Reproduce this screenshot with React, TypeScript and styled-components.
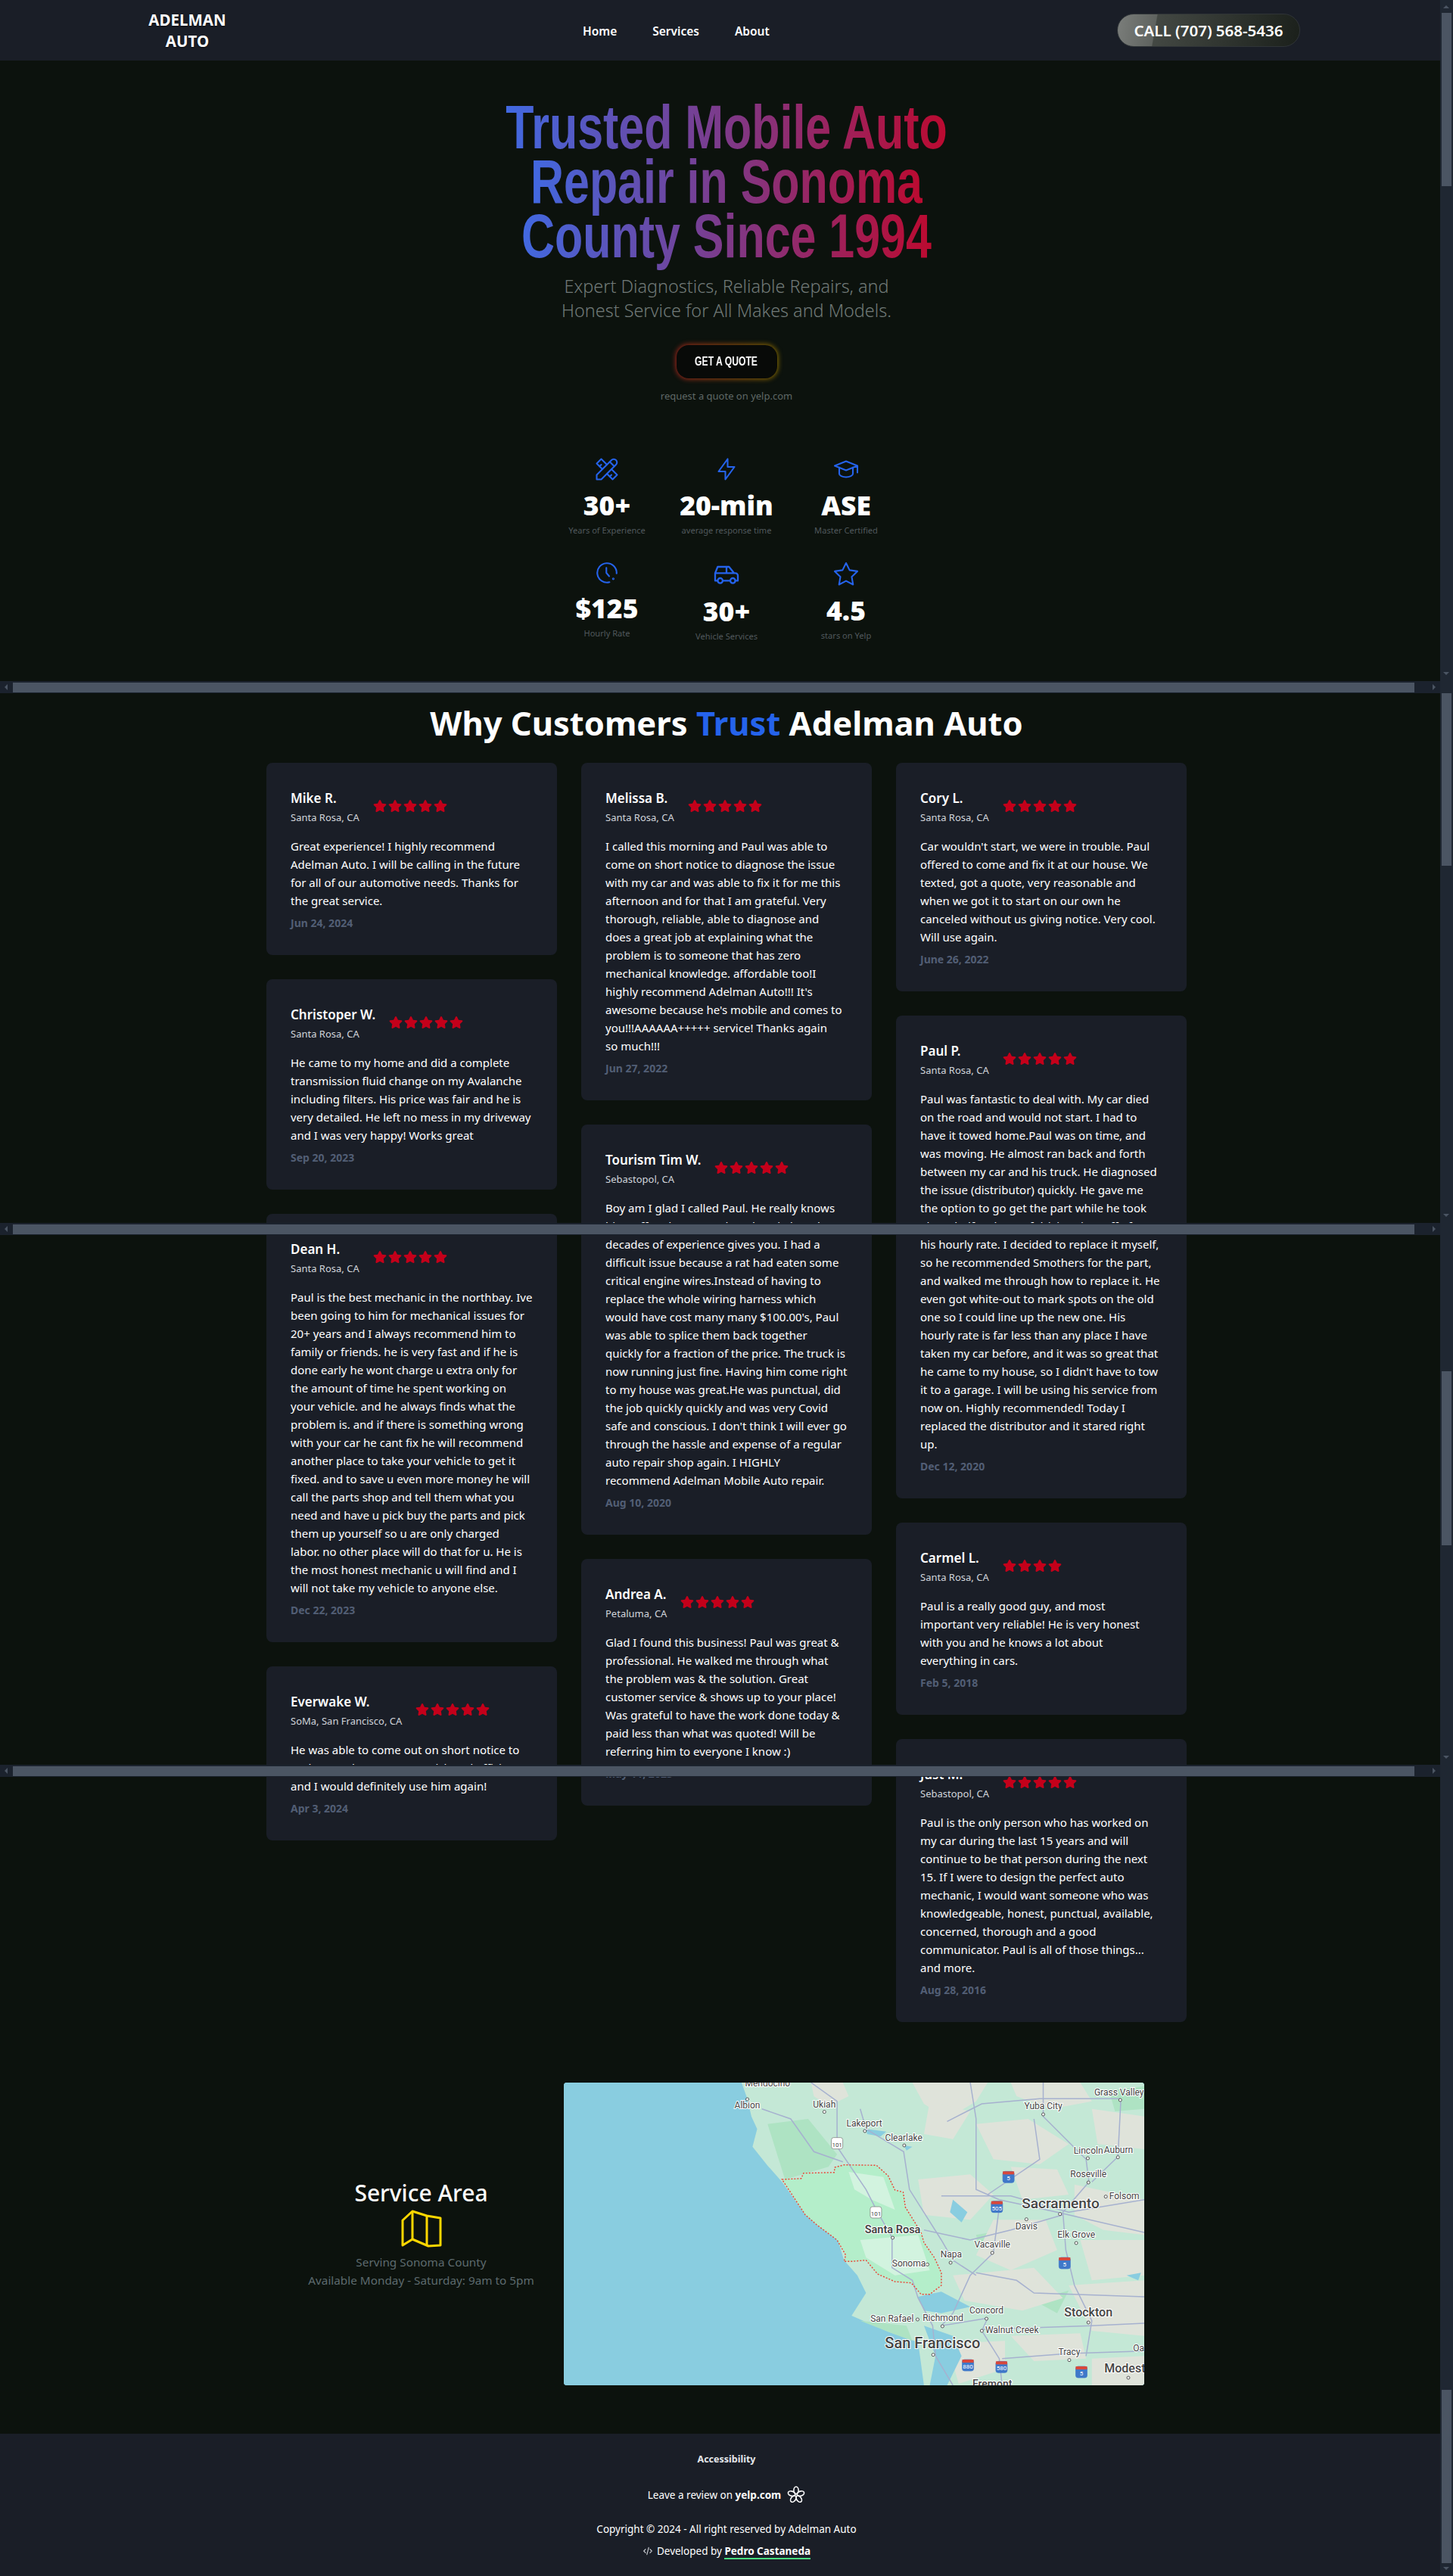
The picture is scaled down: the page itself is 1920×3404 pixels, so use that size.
import React from "react";
import styled, { createGlobalStyle } from "styled-components";
import { FaStar } from "react-icons/fa";
import { TbBolt, TbCar, TbCode, TbSchool, TbStar, TbTools } from "react-icons/tb";

const GlobalStyle = createGlobalStyle`
  * { box-sizing: border-box; }
  html, body { margin: 0; padding: 0; background: #0c120d; }
  body {
    font-family: "Noto Sans", "Liberation Sans", sans-serif;
    color: #fff;
    width: 1920px;
  }
`;

type Review = {
  name: string;
  place: string;
  text: string;
  date: string;
  stars?: number;
};

const column1: Review[] = [
  {
    name: "Mike R.",
    place: "Santa Rosa, CA",
    text: "Great experience! I highly recommend Adelman Auto. I will be calling in the future for all of our automotive needs. Thanks for the great service.",
    date: "Jun 24, 2024",
  },
  {
    name: "Christoper W.",
    place: "Santa Rosa, CA",
    text: "He came to my home and did a complete transmission fluid change on my Avalanche including filters. His price was fair and he is very detailed. He left no mess in my driveway and I was very happy! Works great",
    date: "Sep 20, 2023",
  },
  {
    name: "Dean H.",
    place: "Santa Rosa, CA",
    text: "Paul is the best mechanic in the northbay. Ive been going to him for mechanical issues for 20+ years and I always recommend him to family or friends. he is very fast and if he is done early he wont charge u extra only for the amount of time he spent working on your vehicle. and he always finds what the problem is. and if there is something wrong with your car he cant fix he will recommend another place to take your vehicle to get it fixed. and to save u even more money he will call the parts shop and tell them what you need and have u pick buy the parts and pick them up yourself so u are only charged\nlabor. no other place will do that for u. He is\nthe most honest mechanic u will find and I\nwill not take my vehicle to anyone else.",
    date: "Dec 22, 2023",
  },
  {
    name: "Everwake W.",
    place: "SoMa, San Francisco, CA",
    text: "He was able to come out on short notice to replace my battery, very quick and efficient and I would definitely use him again!",
    date: "Apr 3, 2024",
  },
];

const column2: Review[] = [
  {
    name: "Melissa B.",
    place: "Santa Rosa, CA",
    text: "I called this morning and Paul was able to come on short notice to diagnose the issue with my car and was able to fix it for me this afternoon and for that I am grateful. Very thorough, reliable, able to diagnose and does a great job at explaining what the problem is to someone that has zero mechanical knowledge. affordable too!I highly recommend Adelman Auto!!! It's awesome because he's mobile and comes to you!!!AAAAAA+++++ service! Thanks again\nso much!!!",
    date: "Jun 27, 2022",
  },
  {
    name: "Tourism Tim W.",
    place: "Sebastopol, CA",
    text: "Boy am I glad I called Paul. He really knows his stuff and you can't buy the wisdom that\ndecades of experience gives you. I had a difficult issue because a rat had eaten some critical engine wires.Instead of having to\nreplace the whole wiring harness which would have cost many many $100.00's, Paul was able to splice them back together\nquickly for a fraction of the price. The truck is now running just fine. Having him come right to my house was great.He was punctual, did the job quickly quickly and was very Covid safe and conscious. I don't think I will ever go through the hassle and expense of a regular auto repair shop again. I HIGHLY recommend Adelman Mobile Auto repair.",
    date: "Aug 10, 2020",
  },
  {
    name: "Andrea A.",
    place: "Petaluma, CA",
    text: "Glad I found this business! Paul was great & professional. He walked me through what the problem was & the solution. Great customer service & shows up to your place! Was grateful to have the work done today & paid less than what was quoted! Will be referring him to everyone I know :)",
    date: "May 11, 2023",
  },
];

const column3: Review[] = [
  {
    name: "Cory L.",
    place: "Santa Rosa, CA",
    text: "Car wouldn't start, we were in trouble. Paul offered to come and fix it at our house. We texted, got a quote, very reasonable and when we got it to start on our own he canceled without us giving notice. Very cool. Will use again.",
    date: "June 26, 2022",
  },
  {
    name: "Paul P.",
    place: "Santa Rosa, CA",
    text: "Paul was fantastic to deal with. My car died on the road and would not start. I had to have it towed home.Paul was on time, and was moving. He almost ran back and forth between my car and his truck. He diagnosed the issue (distributor) quickly. He gave me the option to go get the part while he took about half an hour of driving time off of\nhis hourly rate. I decided to replace it myself, so he recommended Smothers for the part, and walked me through how to replace it. He even got white-out to mark spots on the old one so I could line up the new one. His hourly rate is far less than any place I have taken my car before, and it was so great that he came to my house, so I didn't have to tow it to a garage. I will be using his service from now on. Highly recommended! Today I replaced the distributor and it stared right up.",
    date: "Dec 12, 2020",
  },
  {
    name: "Carmel L.",
    place: "Santa Rosa, CA",
    text: "Paul is a really good guy, and most\nimportant very reliable! He is very honest with you and he knows a lot about everything in cars.",
    date: "Feb 5, 2018",
    stars: 4,
  },
  {
    name: "Just M.",
    place: "Sebastopol, CA",
    text: "Paul is the only person who has worked on my car during the last 15 years and will continue to be that person during the next 15. If I were to design the perfect auto mechanic, I would want someone who was knowledgeable, honest, punctual, available, concerned, thorough and a good communicator. Paul is all of those things... and more.",
    date: "Aug 28, 2016",
  },
];

const Page = styled.div`
  position: relative;
  width: 1920px;
  height: 3404px;
  overflow: hidden;
  background: #0c120d;
`;

const Nav = styled.nav`
  height: 80px;
  background: #1a1e27;
  padding: 0 202px 0 195px;
  display: grid;
  grid-template-columns: auto auto 1fr;
  align-items: center;
`;

const Logo = styled.a`
  width: 105px;
  text-align: center;
  font-size: 20.5px;
  line-height: 28px;
  font-weight: 700;
  text-transform: uppercase;
  text-shadow: 0 1px 2px rgba(0, 0, 0, 0.6);
`;

const NavLinks = styled.ul`
  list-style: none;
  margin: 2px 0 0 470px;
  padding: 0;
  display: flex;
  gap: 47px;
  font-size: 15.5px;
  font-weight: 600;
`;

const CallButton = styled.a`
  justify-self: end;
  width: 242px;
  height: 44px;
  border-radius: 22px;
  border: 1px solid #2f3437;
  background: linear-gradient(100deg, #7b7e7b 0%, #5f635f 21%, #434843 21.5%, #1b201b 100%);
  display: flex;
  align-items: center;
  justify-content: center;
  font-size: 20.5px;
  font-weight: 600;
`;

const Hero = styled.section`
  padding-top: 52px;
  display: flex;
  flex-direction: column;
  align-items: center;
  text-align: center;
`;

const Title = styled.h1`
  margin: 0;
  width: 800px;
  font-family: "Liberation Sans", sans-serif;
  font-size: 82px;
  line-height: 72px;
  font-weight: 700;
  transform: scaleX(0.743);

  span {
    background: linear-gradient(90deg, #4169e1, #bb0a30);
    -webkit-background-clip: text;
    background-clip: text;
    color: transparent;
    -webkit-box-decoration-break: clone;
    box-decoration-break: clone;
  }
`;

const Subtitle = styled.p`
  margin: 14px 0 0;
  width: 470px;
  font-size: 23.4px;
  line-height: 32px;
  font-weight: 300;
  color: #717a78;
`;

const QuoteWrap = styled.div`
  position: relative;
  z-index: 0;
`;

const QuoteButton = styled.a`
  position: relative;
  margin-top: 30px;
  width: 133px;
  height: 44px;
  border-radius: 16px;
  background: #080a08;
  display: flex;
  align-items: center;
  justify-content: center;
  font-family: "Liberation Sans", sans-serif;
  font-size: 16px;
  font-weight: 700;
  text-transform: uppercase;

  span {
    transform: scaleX(0.76);
    white-space: nowrap;
  }

  &::before {
    content: "";
    position: absolute;
    inset: -1px;
    z-index: -1;
    border-radius: 17px;
    background: linear-gradient(90deg, #a3241c, #8a7000);
    filter: blur(3px);
  }
`;

const QuoteNote = styled.p`
  margin: 13px 0 0;
  font-size: 13px;
  line-height: 20px;
  color: #5f6866;
`;

const Stats = styled.div`
  margin-top: 72px;
  display: grid;
  grid-template-columns: repeat(3, 158px);
  row-gap: 34px;
`;

const Stat = styled.div<{ $iconH: number; $iconSize?: number }>`
  display: flex;
  flex-direction: column;
  align-items: center;

  svg {
    width: ${(p) => p.$iconSize ?? 36}px;
    height: ${(p) => p.$iconSize ?? 36}px;
    margin: ${(p) => (p.$iconH - (p.$iconSize ?? 36)) / 2}px 0;
    color: #2563eb;
    stroke-width: 1.4;
    display: block;
  }
`;

const StatValue = styled.div`
  margin-top: 12px;
  font-size: 35.5px;
  line-height: 40px;
  font-weight: 900;
`;

const StatLabel = styled.div`
  margin-top: 6px;
  font-size: 11.1px;
  line-height: 16px;
  color: #50585c;
`;

const ReviewsTitle = styled.h2`
  margin: 82px 0 29px;
  text-align: center;
  font-size: 43.5px;
  line-height: 48px;
  font-weight: 700;

  em {
    font-style: normal;
    color: #2563eb;
  }
`;

const ReviewGrid = styled.div`
  width: 1216px;
  margin: 0 auto;
  display: grid;
  grid-template-columns: repeat(3, 384px);
  column-gap: 32px;
  align-items: start;
`;

const ReviewColumn = styled.div`
  display: flex;
  flex-direction: column;
  gap: 32px;
`;

const Card = styled.article`
  background: #1a1e27;
  border-radius: 8px;
  padding: 32px;
`;

const CardHead = styled.header`
  display: flex;
  align-items: center;
  gap: 18px;
  margin-bottom: 16px;
`;

const Name = styled.div`
  font-size: 17px;
  line-height: 30px;
  font-weight: 600;
`;

const Place = styled.div`
  font-size: 13px;
  line-height: 20px;
  color: #d1d5db;
`;

const Stars = styled.div`
  display: flex;
  gap: 2px;
  color: #c4001a;
`;

const Body = styled.p`
  margin: 0;
  font-size: 15px;
  line-height: 24px;
  white-space: pre-line;
`;

const DateLine = styled.div`
  margin-top: 8px;
  font-size: 14px;
  line-height: 20px;
  font-weight: 700;
  color: #525e75;
`;

const ServiceArea = styled.section`
  margin-top: 80px;
  display: flex;
  justify-content: center;
  align-items: center;
  gap: 40px;
`;

const ServiceInfo = styled.div`
  width: 296px;
  display: flex;
  flex-direction: column;
  align-items: center;
  text-align: center;
`;

const ServiceTitle = styled.h3`
  margin: 0;
  font-size: 30px;
  line-height: 36px;
  font-weight: 500;
`;

const ServiceLine = styled.div`
  font-size: 15.3px;
  line-height: 24px;
  color: #5d6a6e;
  white-space: nowrap;
`;

const MapIconBox = styled.div`
  margin: 4px 0 7px;
  height: 50px;
`;

const MapFrame = styled.div`
  width: 767px;
  height: 400px;
  border-radius: 4px;
  overflow: hidden;
  background: #89cde0;

  svg {
    display: block;
  }
`;

const Footer = styled.footer`
  margin-top: 64px;
  height: 188px;
  background: #1a1e27;
  padding-top: 24px;
  display: flex;
  flex-direction: column;
  align-items: center;
  font-size: 13.5px;
  line-height: 20px;
`;

const FooterLink = styled.div`
  font-size: 12.5px;
  font-weight: 700;
  color: #e5e7eb;
`;

const YelpRow = styled.div`
  margin-top: 25px;
  height: 24px;
  display: flex;
  align-items: center;
  gap: 8px;

  b {
    font-weight: 700;
  }
`;

const Copy = styled.div`
  margin-top: 23px;
`;

const Dev = styled.div`
  margin-top: 9px;
  display: flex;
  align-items: center;
  gap: 5px;

  svg {
    color: #c9ccd1;
  }

  b {
    font-weight: 700;
    border-bottom: 2px solid #4ade80;
    line-height: 18px;
  }
`;

/* the stitched capture has the browser scrollbars painted over the page */
const VTrack = styled.div`
  position: absolute;
  top: 0;
  right: 0;
  width: 17px;
  height: 3404px;
  background: #1f2732;
`;

const VThumb = styled.div<{ $top: number; $h: number }>`
  position: absolute;
  left: 2px;
  width: 13px;
  top: ${(p) => p.$top}px;
  height: ${(p) => p.$h}px;
  background: #4b5563;
`;

const VArrow = styled.div<{ $top: number; $up?: boolean }>`
  position: absolute;
  left: 4px;
  top: ${(p) => p.$top}px;
  width: 0;
  height: 0;
  border-left: 4px solid transparent;
  border-right: 4px solid transparent;
  ${(p) => (p.$up ? "border-bottom: 4px solid #4b5563;" : "border-top: 4px solid #4b5563;")}
`;

const HTrack = styled.div<{ $top: number }>`
  position: absolute;
  left: 0;
  top: ${(p) => p.$top}px;
  width: 1903px;
  height: 16px;
  background: #1b222d;
`;

const HThumb = styled.div`
  position: absolute;
  left: 17px;
  top: 2px;
  width: 1852px;
  height: 13px;
  background: #4b5563;
`;

const HArrow = styled.div<{ $right?: boolean }>`
  position: absolute;
  top: 4px;
  width: 0;
  height: 0;
  border-top: 4px solid transparent;
  border-bottom: 4px solid transparent;
  ${(p) =>
    p.$right
      ? "left: 1893px; border-left: 4px solid #4b5563;"
      : "left: 6px; border-right: 4px solid #4b5563;"}
`;

const ReviewCard: React.FC<{ review: Review }> = ({ review }) => (
  <Card>
    <CardHead>
      <div>
        <Name>{review.name}</Name>
        <Place>{review.place}</Place>
      </div>
      <Stars>
        {Array.from({ length: review.stars ?? 5 }).map((_, i) => (
          <FaStar key={i} size={18} />
        ))}
      </Stars>
    </CardHead>
    <Body>{review.text}</Body>
    <DateLine>{review.date}</DateLine>
  </Card>
);

const ClockIcon = () => (
  <svg viewBox="0 0 24 24" fill="none" stroke="currentColor" strokeLinecap="round" strokeLinejoin="round">
    <path d="M20.5 12.5A8.5 8.5 0 1 0 14.2 20.2" />
    <path d="M11.5 7.5v4.5l2.5 3" />
    <circle cx="17.6" cy="17.2" r="0.4" />
  </svg>
);

const YelpIcon = () => (
  <svg width="24" height="24" viewBox="-12 -12 24 24" fill="none" stroke="#fff" strokeWidth="1.6">
    {[0, 72, 144, 216, 288].map((a) => (
      <ellipse key={a} cx="0" cy="-6.2" rx="3.1" ry="4.8" transform={`rotate(${a})`} />
    ))}
  </svg>
);

// the reference coordinates were read off a crop: x / 1.307 and y / 3
const mx = (x: number) => (x - 528) / 1.307;
const my = (y: number) => (y - 96) / 3;
const pts = (s: string) =>
  s
    .trim()
    .split(/\s+/)
    .map((p) => {
      const [x, y] = p.split(",").map(Number);
      return `${mx(x).toFixed(1)},${my(y).toFixed(1)}`;
    })
    .join(" ");

const land =
  "835,96 845,160 852,230 862,280 854,350 880,425 905,490 945,620 1000,710 1012,800 1035,860 1050,930 1025,1020 1090,1085 1140,1125 1150,1296 1531,1296 1531,96";

const beige = [
  "955,96 1010,96 1020,150 985,190 960,150",
  "1130,96 1260,96 1240,170 1190,240 1150,180",
  "1300,96 1420,96 1440,170 1370,200 1310,150",
  "1160,170 1230,210 1200,320 1150,300",
  "1240,260 1330,240 1400,340 1350,420 1270,400",
  "1440,200 1531,230 1531,360 1450,340",
  "1140,480 1230,460 1270,540 1230,640 1150,620",
  "1300,430 1380,440 1400,540 1320,560",
  "1410,500 1531,560 1531,700 1460,680 1410,620",
  "1270,640 1360,640 1380,760 1300,840 1240,780",
  "1420,720 1531,720 1531,860 1440,880",
  "1200,860 1340,830 1390,950 1320,1000 1220,960",
  "1400,900 1531,880 1531,1100 1440,1080",
  "1300,1100 1420,1090 1430,1190 1340,1200",
  "1190,1130 1290,1120 1290,1230 1210,1290",
  "1440,1190 1531,1180 1531,1296 1440,1296",
];

const green = [
  "880,260 950,240 1000,380 985,430 910,480",
  "1040,1040 1120,1060 1130,1120 1090,1085",
  "1340,960 1400,920 1380,1010",
  "1240,700 1290,680 1300,760 1250,790",
  "1470,130 1531,110 1531,200 1480,210",
];

const sonoma =
  "905,480 938,476 942,455 995,452 996,432 1012,422 1068,424 1088,465 1100,522 1114,530 1118,590 1145,690 1150,730 1168,790 1180,850 1180,900 1160,935 1145,935 1128,890 1100,885 1070,855 1050,800 1025,805 1012,805 1015,780 1000,720 965,660 945,620 925,550";

const water = [
  "1140,945 1180,925 1230,985 1180,1010 1150,1000",
  "1150,1060 1200,1100 1215,1180 1190,1296 1160,1296 1170,1180",
  "1050,280 1085,290 1075,310 1052,300",
  "1115,345 1130,350 1120,365",
  "1200,560 1225,610 1215,650 1195,610",
  "1500,860 1525,850 1520,880",
];

const roads = [
  "955,96 1000,170 1000,350 1050,520 1070,610 1095,710 1095,830 1130,880 1140,950 1165,1060 1170,1180 1200,1296",
  "870,200 920,240 960,370 1010,410",
  "1040,200 1050,280 1115,370 1125,520 1180,720 1200,800 1240,860",
  "1190,250 1250,180 1350,160 1430,160 1490,160",
  "1230,96 1240,240 1240,520 1280,560 1380,610 1531,690",
  "1356,96 1356,230 1430,400 1435,490 1390,610 1395,760 1410,900 1440,1040 1430,1180",
  "1490,170 1485,390 1440,490",
  "1280,590 1270,770 1230,860 1200,1010 1180,1060",
  "1340,240 1350,400 1260,540",
  "1390,620 1300,680 1230,720 1150,680",
  "1531,560 1400,610 1300,545 1180,545",
  "1240,850 1310,880 1340,930 1531,945",
  "1260,1030 1250,1080 1280,1190 1285,1296",
  "1250,1075 1440,1060 1531,1050",
  "1285,1190 1400,1170 1531,1160",
  "1180,1060 1260,1030",
];

type Label = [string, number, number, number, number?];

const labels: Label[] = [
  ["Mendocino", 880, 112, 12],
  ["Albion", 845, 198, 12],
  ["Ukiah", 978, 195, 12],
  ["Lakeport", 1047, 270, 12],
  ["Clearlake", 1115, 328, 12],
  ["Grass Valley", 1487, 148, 12],
  ["Yuba City", 1356, 201, 12],
  ["Lincoln", 1434, 377, 12],
  ["Auburn", 1486, 376, 12],
  ["Roseville", 1434, 472, 12],
  ["Folsom", 1496, 558, 12],
  ["Sacramento", 1386, 594, 19, 500],
  ["Davis", 1327, 678, 12],
  ["Elk Grove", 1413, 711, 12],
  ["Vacaville", 1268, 750, 12],
  ["Santa Rosa", 1096, 692, 14.5, 600],
  ["Napa", 1197, 790, 12],
  ["Sonoma", 1124, 826, 12],
  ["Concord", 1258, 1012, 12],
  ["San Rafael", 1095, 1045, 12],
  ["Richmond", 1183, 1042, 12],
  ["Walnut Creek", 1302, 1090, 12],
  ["Stockton", 1434, 1024, 16, 500],
  ["San Francisco", 1165, 1150, 20, 500],
  ["Tracy", 1401, 1177, 12],
  ["Oa", 1521, 1162, 12],
  ["Modest", 1497, 1245, 16, 500],
  ["Fremont", 1268, 1304, 14, 500],
];

const dots: [number, number][] = [
  [845, 162], [978, 212], [1048, 288], [1116, 345], [1489, 165], [1356, 222], [1433, 396], [1485, 392],
  [1434, 492], [1464, 548], [1385, 617], [1327, 638], [1413, 732], [1268, 771], [1096, 711], [1196, 810],
  [1156, 817], [1258, 1032], [1139, 1035], [1182, 1062], [1250, 1080], [1434, 1047], [1166, 1175], [1401, 1196], [1503, 1266],
];

const shields: [string, number, number, boolean][] = [
  ["101", 1000, 338, false],
  ["101", 1067, 612, false],
  ["5", 1296, 472, true],
  ["505", 1276, 590, true],
  ["5", 1393, 813, true],
  ["880", 1226, 1218, true],
  ["580", 1284, 1225, true],
  ["5", 1422, 1245, true],
];

const ServiceMap = () => (
  <svg width="767" height="400" viewBox="0 0 767 400" fontFamily="Roboto, sans-serif">
    <rect width="767" height="400" fill="#89cde0" />
    <polygon points={pts(land)} fill="#c4e8d6" />
    {green.map((p, i) => (
      <polygon key={i} points={pts(p)} fill="#aee3c3" />
    ))}
    {beige.map((p, i) => (
      <polygon key={i} points={pts(p)} fill="#dfe3da" />
    ))}
    <polygon points={pts(sonoma)} fill="#b4eeca" />
    <polygon points={pts("1020,450 1080,470 1100,600 1060,560 1030,520")} fill="#d2f3df" />
    <polygon points={pts("1040,720 1140,700 1160,840 1100,860 1050,790")} fill="#d2f3df" />
    {water.map((p, i) => (
      <polygon key={i} points={pts(p)} fill="#89cde0" />
    ))}
    {roads.map((p, i) => (
      <polyline key={i} points={pts(p)} fill="none" stroke="#a6b1cf" strokeWidth="1.5" />
    ))}
    <polygon points={pts(sonoma)} fill="none" stroke="#ea4335" strokeWidth="1.4" strokeDasharray="2 2" />
    {shields.map(([t, x, y, blue], i) => (
      <g key={i} transform={`translate(${mx(x)} ${my(y)})`}>
        <rect x="-7.5" y="-8" width="15" height="15" rx="3" fill={blue ? "#3f78c9" : "#fff"} stroke={blue ? "#3f78c9" : "#777"} strokeWidth="0.7" />
        {blue && <rect x="-7.5" y="-8" width="15" height="4" fill="#d8483b" />}
        <text y="4" textAnchor="middle" fontSize="8" fill={blue ? "#fff" : "#444"}>
          {t}
        </text>
      </g>
    ))}
    {dots.map(([x, y], i) => (
      <circle key={i} cx={mx(x)} cy={my(y)} r="2" fill="#fff" stroke="#555" strokeWidth="1" />
    ))}
    {labels.map(([t, x, y, size, weight], i) => (
      <text
        key={i}
        x={mx(x)}
        y={my(y)}
        textAnchor="middle"
        fontSize={size}
        fontWeight={weight ?? 400}
        fill="#444"
        stroke="#fff"
        strokeWidth="2"
        paintOrder="stroke"
      >
        {t}
      </text>
    ))}
  </svg>
);

const MapIcon = () => (
  <svg width="54" height="50" viewBox="0 0 54 50" fill="none" stroke="#ffd700" strokeWidth="3" strokeLinejoin="round">
    <path d="M15 2 2 14v33l13-8 21 9 16-1V11L34 8Z" />
    <path d="M15 2v37M34 8v39" />
  </svg>
);

const scrollThumbs = [
  [17, 229],
  [916, 228],
  [1812, 230],
  [3158, 229],
];

export default function App() {
  return (
    <Page>
      <GlobalStyle />
      <Nav>
        <Logo>Adelman Auto</Logo>
        <NavLinks>
          <li>Home</li>
          <li>Services</li>
          <li>About</li>
        </NavLinks>
        <CallButton>CALL (707) 568-5436</CallButton>
      </Nav>

      <Hero>
        <Title>
          <span>Trusted Mobile Auto Repair in Sonoma County Since 1994</span>
        </Title>
        <Subtitle>Expert Diagnostics, Reliable Repairs, and Honest Service for All Makes and Models.</Subtitle>
        <QuoteWrap>
          <QuoteButton>
            <span>Get a quote</span>
          </QuoteButton>
        </QuoteWrap>
        <QuoteNote>request a quote on yelp.com</QuoteNote>
        <Stats>
          <Stat $iconH={30}>
            <TbTools />
            <StatValue>30+</StatValue>
            <StatLabel>Years of Experience</StatLabel>
          </Stat>
          <Stat $iconH={30}>
            <TbBolt />
            <StatValue>20-min</StatValue>
            <StatLabel>average response time</StatLabel>
          </Stat>
          <Stat $iconH={30}>
            <TbSchool />
            <StatValue>ASE</StatValue>
            <StatLabel>Master Certified</StatLabel>
          </Stat>
          <Stat $iconH={28}>
            <ClockIcon />
            <StatValue>$125</StatValue>
            <StatLabel>Hourly Rate</StatLabel>
          </Stat>
          <Stat $iconH={32} $iconSize={40}>
            <TbCar />
            <StatValue>30+</StatValue>
            <StatLabel>Vehicle Services</StatLabel>
          </Stat>
          <Stat $iconH={31}>
            <TbStar />
            <StatValue>4.5</StatValue>
            <StatLabel>stars on Yelp</StatLabel>
          </Stat>
        </Stats>
      </Hero>

      <section>
        <ReviewsTitle>
          Why Customers <em>Trust</em> Adelman Auto
        </ReviewsTitle>
        <ReviewGrid>
          {[column1, column2, column3].map((col, i) => (
            <ReviewColumn key={i}>
              {col.map((r) => (
                <ReviewCard key={r.name} review={r} />
              ))}
            </ReviewColumn>
          ))}
        </ReviewGrid>
      </section>

      <ServiceArea>
        <ServiceInfo>
          <ServiceTitle>Service Area</ServiceTitle>
          <MapIconBox>
            <MapIcon />
          </MapIconBox>
          <ServiceLine>Serving Sonoma County</ServiceLine>
          <ServiceLine>Available Monday - Saturday: 9am to 5pm</ServiceLine>
        </ServiceInfo>
        <MapFrame>
          <ServiceMap />
        </MapFrame>
      </ServiceArea>

      <Footer>
        <FooterLink>Accessibility</FooterLink>
        <YelpRow>
          <span>
            Leave a review on <b>yelp.com</b>
          </span>
          <YelpIcon />
        </YelpRow>
        <Copy>Copyright © 2024 - All right reserved by Adelman Auto</Copy>
        <Dev>
          <TbCode size={14} />
          <span>
            Developed by <b>Pedro Castaneda</b>
          </span>
        </Dev>
      </Footer>

      {[900, 1616, 2332].map((top) => (
        <HTrack key={top} $top={top}>
          <HArrow />
          <HThumb />
          <HArrow $right />
        </HTrack>
      ))}
      <VTrack>
        {scrollThumbs.map(([top, h]) => (
          <VThumb key={top} $top={top} $h={h} />
        ))}
        <VArrow $up $top={7} />
        <VArrow $top={888} />
        <VArrow $top={1604} />
        <VArrow $top={2320} />
        <VArrow $top={3392} />
      </VTrack>
    </Page>
  );
}
